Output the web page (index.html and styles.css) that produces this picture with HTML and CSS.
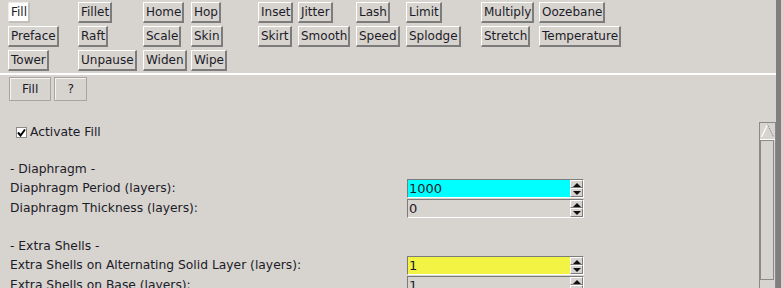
FILE: index.html
```html
<!DOCTYPE html>
<html>
<head>
<meta charset="utf-8">
<link rel="stylesheet" href="styles.css">
</head>
<body>
<div class="app">
  <div class="toolbar">
    <span class="btn selected">Fill</span>
    <span class="btn">Preface</span>
    <span class="btn">Tower</span>
    <span class="btn">Fillet</span>
    <span class="btn">Raft</span>
    <span class="btn">Unpause</span>
    <span class="btn">Home</span>
    <span class="btn">Scale</span>
    <span class="btn">Widen</span>
    <span class="btn">Hop</span>
    <span class="btn">Skin</span>
    <span class="btn">Wipe</span>
    <span class="btn">Inset</span>
    <span class="btn">Skirt</span>
    <span class="slot"></span>
    <span class="btn">Jitter</span>
    <span class="btn">Smooth</span>
    <span class="slot"></span>
    <span class="btn">Lash</span>
    <span class="btn">Speed</span>
    <span class="slot"></span>
    <span class="btn">Limit</span>
    <span class="btn">Splodge</span>
    <span class="slot"></span>
    <span class="btn">Multiply</span>
    <span class="btn">Stretch</span>
    <span class="slot"></span>
    <span class="btn">Oozebane</span>
    <span class="btn">Temperature</span>
  </div>
  <div class="lower">
    <div class="tabs">
      <span class="tab">Fill</span>
      <span class="tab">?</span>
    </div>
    <div class="scrollarea">
      <div class="content">
        <div class="check-row">
          <span class="checkbox"><svg width="9" height="9" viewBox="0 0 9 9"><path d="M1 4.5 L3.5 7.5 L8 1.5" fill="none" stroke="#000" stroke-width="2"/></svg></span>
          <span class="label">Activate Fill</span>
        </div>
        <div class="header">- Diaphragm -</div>
        <div class="field">
          <span class="label">Diaphragm Period (layers):</span>
          <span class="spin cyan"><span class="value">1000</span><span class="arrows"><span class="arrow up"></span><span class="arrow down"></span></span></span>
        </div>
        <div class="field">
          <span class="label">Diaphragm Thickness (layers):</span>
          <span class="spin plain"><span class="value">0</span><span class="arrows"><span class="arrow up"></span><span class="arrow down"></span></span></span>
        </div>
        <div class="header second">- Extra Shells -</div>
        <div class="field">
          <span class="label">Extra Shells on Alternating Solid Layer (layers):</span>
          <span class="spin yellow"><span class="value">1</span><span class="arrows"><span class="arrow up"></span><span class="arrow down"></span></span></span>
        </div>
        <div class="field">
          <span class="label">Extra Shells on Base (layers):</span>
          <span class="spin plain"><span class="value">1</span><span class="arrows"><span class="arrow up"></span><span class="arrow down"></span></span></span>
        </div>
      </div>
      <div class="scrollbar">
        <div class="sb-up"><svg width="15" height="15" viewBox="0 0 15 15"><path d="M1.5 14 L7.5 1.5" stroke="#fff" stroke-width="1.2" fill="none"/><path d="M7.5 1.5 L13.5 14" stroke="#7a7a7a" stroke-width="1" stroke-dasharray="1 1" fill="none"/></svg></div>
        <div class="sb-trough"><div class="sb-thumb"></div></div>
      </div>
    </div>
  </div>
</div>
</body>
</html>
```

FILE: styles.css
```css
html, body {
  margin: 0;
  padding: 0;
  background: #d7d3cf;
  overflow: hidden;
}
body {
  width: 783px;
  height: 288px;
  font-family: "DejaVu Sans", "Liberation Sans", sans-serif;
  font-size: 12px;
  color: #1c1c28;
}
.app {
  width: 776px;
  height: 288px;
  border-right: 5px solid #7f7f7f;
  display: flex;
  flex-direction: column;
}
.toolbar {
  height: 71px;
  padding: 2px 0 0 8px;
  display: grid;
  grid-auto-flow: column;
  grid-template-rows: repeat(3, 21px);
  grid-template-columns: 70px 65px 48px 67px 40px 58px 50px 75px 58px auto;
  row-gap: 3px;
  align-items: start;
  justify-items: start;
}
.btn {
  display: block;
  height: 21px;
  box-sizing: border-box;
  line-height: 16px;
  padding: 1px 1px 1px 2px;
  border-style: solid;
  border-width: 1px 2px 2px 1px;
  border-color: #ffffff #7c7c7c #7c7c7c #ffffff;
  white-space: nowrap;
}
.btn.selected {
  background: #ffffff;
  border-color: #ecebea #c2bfbb #c2bfbb #ecebea;
}
.lower {
  flex: 1;
  border-top: 2px solid #ffffff;
  display: flex;
  flex-direction: column;
  min-height: 0;
}
.tabs {
  display: flex;
  gap: 3px;
  padding: 2px 0 0 9px;
}
.tab {
  display: block;
  height: 24px;
  box-sizing: border-box;
  line-height: 22px;
  padding: 0 12px;
  border: 1px solid #a8a4a0;
  box-shadow: inset 1px 1px 0 #f4f3f2;
  text-align: center;
  font-size: 12.3px;
}
.scrollarea {
  flex: 1;
  display: flex;
  margin-top: 21px;
  min-height: 0;
}
.content {
  flex: 1;
  padding-left: 10px;
  font-size: 12.3px;
}
.check-row {
  display: flex;
  align-items: center;
  height: 20px;
  padding-left: 6px;
  gap: 3px;
}
.checkbox {
  width: 11px;
  height: 11px;
  box-sizing: border-box;
  background: #fff;
  border: 1px solid #8a8a8a;
  display: flex;
  align-items: center;
  justify-content: center;
}
.header {
  margin-top: 19px;
  height: 17px;
  line-height: 17px;
}
.header.second {
  margin-top: 20px;
}
.field {
  display: flex;
  align-items: center;
  height: 20px;
}
.field .label {
  width: 397px;
}
.spin {
  display: flex;
  width: 177px;
  height: 19px;
  box-sizing: border-box;
  border-style: solid;
  border-width: 1px;
  border-color: #7c7c7c #ffffff #ffffff #7c7c7c;
}
.spin.cyan { background: #00ffff; }
.spin.yellow { background: #f3f344; }
.spin .value {
  flex: 1;
  font-size: 13px;
  line-height: 17px;
  padding-left: 1px;
  color: #1c1c28;
}
.arrows {
  display: flex;
  flex-direction: column;
  width: 13px;
}
.arrow {
  flex: 1;
  background: #d7d3cf;
  border-style: solid;
  border-width: 1px;
  border-color: #ffffff #7c7c7c #7c7c7c #ffffff;
  position: relative;
}
.arrow::after {
  content: "";
  position: absolute;
  left: 2px;
  width: 0;
  height: 0;
  border-left: 4px solid transparent;
  border-right: 4px solid transparent;
}
.arrow.up::after {
  top: 2px;
  border-bottom: 4px solid #111;
}
.arrow.down::after {
  top: 2px;
  border-top: 4px solid #111;
}
.scrollbar {
  width: 17px;
  box-sizing: border-box;
  border: 1px solid #8a8a8a;
  border-bottom: none;
  display: flex;
  flex-direction: column;
}
.sb-up {
  height: 16px;
  border-bottom: 1px solid #ffffff;
  display: flex;
  justify-content: center;
}
.sb-trough {
  flex: 1;
  padding: 0 1px 0 0;
}
.sb-thumb {
  height: 140px;
  box-sizing: border-box;
  border: 1px solid #8a8a8a;
}
```
